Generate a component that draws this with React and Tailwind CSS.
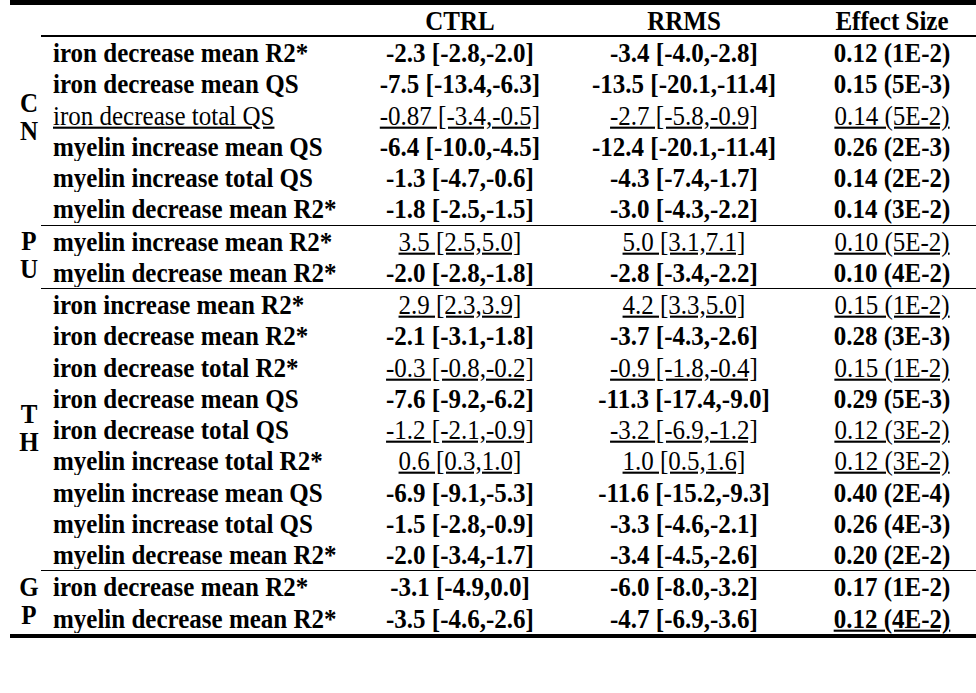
import React from 'react';

// b = bold, u = regular + underline, bu = bold + underline
const groups = [
  {
    letters: ['C', 'N'],
    lift: true,
    rows: [
      ['iron decrease mean R2*', 'b', ['-2.3 [-2.8,-2.0]', 'b'], ['-3.4 [-4.0,-2.8]', 'b'], ['0.12 (1E-2)', 'b']],
      ['iron decrease mean QS', 'b', ['-7.5 [-13.4,-6.3]', 'b'], ['-13.5 [-20.1,-11.4]', 'b'], ['0.15 (5E-3)', 'b']],
      ['iron decrease total QS', 'u', ['-0.87 [-3.4,-0.5]', 'u'], ['-2.7 [-5.8,-0.9]', 'u'], ['0.14 (5E-2)', 'u']],
      ['myelin increase mean QS', 'b', ['-6.4 [-10.0,-4.5]', 'b'], ['-12.4 [-20.1,-11.4]', 'b'], ['0.26 (2E-3)', 'b']],
      ['myelin increase total QS', 'b', ['-1.3 [-4.7,-0.6]', 'b'], ['-4.3 [-7.4,-1.7]', 'b'], ['0.14 (2E-2)', 'b']],
      ['myelin decrease mean R2*', 'b', ['-1.8 [-2.5,-1.5]', 'b'], ['-3.0 [-4.3,-2.2]', 'b'], ['0.14 (3E-2)', 'b']],
    ],
  },
  {
    letters: ['P', 'U'],
    rows: [
      ['myelin increase mean R2*', 'b', ['3.5 [2.5,5.0]', 'u'], ['5.0 [3.1,7.1]', 'u'], ['0.10 (5E-2)', 'u']],
      ['myelin decrease mean R2*', 'b', ['-2.0 [-2.8,-1.8]', 'b'], ['-2.8 [-3.4,-2.2]', 'b'], ['0.10 (4E-2)', 'b']],
    ],
  },
  {
    letters: ['T', 'H'],
    rows: [
      ['iron increase mean R2*', 'b', ['2.9 [2.3,3.9]', 'u'], ['4.2 [3.3,5.0]', 'u'], ['0.15 (1E-2)', 'u']],
      ['iron decrease mean R2*', 'b', ['-2.1 [-3.1,-1.8]', 'b'], ['-3.7 [-4.3,-2.6]', 'b'], ['0.28 (3E-3)', 'b']],
      ['iron decrease total R2*', 'b', ['-0.3 [-0.8,-0.2]', 'u'], ['-0.9 [-1.8,-0.4]', 'u'], ['0.15 (1E-2)', 'u']],
      ['iron decrease mean QS', 'b', ['-7.6 [-9.2,-6.2]', 'b'], ['-11.3 [-17.4,-9.0]', 'b'], ['0.29 (5E-3)', 'b']],
      ['iron decrease total QS', 'b', ['-1.2 [-2.1,-0.9]', 'u'], ['-3.2 [-6.9,-1.2]', 'u'], ['0.12 (3E-2)', 'u']],
      ['myelin increase total R2*', 'b', ['0.6 [0.3,1.0]', 'u'], ['1.0 [0.5,1.6]', 'u'], ['0.12 (3E-2)', 'u']],
      ['myelin increase mean QS', 'b', ['-6.9 [-9.1,-5.3]', 'b'], ['-11.6 [-15.2,-9.3]', 'b'], ['0.40 (2E-4)', 'b']],
      ['myelin increase total QS', 'b', ['-1.5 [-2.8,-0.9]', 'b'], ['-3.3 [-4.6,-2.1]', 'b'], ['0.26 (4E-3)', 'b']],
      ['myelin decrease mean R2*', 'b', ['-2.0 [-3.4,-1.7]', 'b'], ['-3.4 [-4.5,-2.6]', 'b'], ['0.20 (2E-2)', 'b']],
    ],
  },
  {
    letters: ['G', 'P'],
    rows: [
      ['iron decrease mean R2*', 'b', ['-3.1 [-4.9,0.0]', 'b'], ['-6.0 [-8.0,-3.2]', 'b'], ['0.17 (1E-2)', 'b']],
      ['myelin decrease mean R2*', 'b', ['-3.5 [-4.6,-2.6]', 'b'], ['-4.7 [-6.9,-3.6]', 'b'], ['0.12 (4E-2)', 'bu']],
    ],
  },
];

const styleFor = (s) =>
  s === 'b' ? 'font-bold' : s === 'u' ? 'font-normal underline' : 'font-bold underline';

// the source glyphs are a touch taller than they are wide
const Txt = ({ s, children }) => (
  <span className={`inline-block scale-y-[1.06] ${styleFor(s)}`}>{children}</span>
);

const Row = ({ row }) => {
  const [label, labelStyle, ctrl, rrms, effect] = row;
  return (
    <div className="flex items-center h-[31.25px] leading-none">
      <div className="w-[319px] pl-[12px]">
        <Txt s={labelStyle}>{label}</Txt>
      </div>
      <div className="w-[200px] text-center">
        <Txt s={ctrl[1]}>{ctrl[0]}</Txt>
      </div>
      <div className="w-[248px] text-center">
        <Txt s={rrms[1]}>{rrms[0]}</Txt>
      </div>
      <div className="w-[168px] text-center">
        <Txt s={effect[1]}>{effect[0]}</Txt>
      </div>
    </div>
  );
};

const Group = ({ group, first }) => (
  <div className="flex">
    <div
      className={`w-[31px] pl-[7px] flex flex-col items-center justify-center font-bold leading-[28px] ${
        group.lift ? 'pb-[26px]' : ''
      }`}
    >
      {group.letters.map((l) => (
        <span key={l} className="scale-y-[1.06]">
          {l}
        </span>
      ))}
    </div>
    <div className={`flex-1 ${first ? '' : 'border-t border-black'}`}>
      {group.rows.map((row, i) => (
        <Row key={i} row={row} />
      ))}
    </div>
  </div>
);

export default function App() {
  return (
    <div className="w-[976px] h-[693px] bg-white text-black text-[25px] font-['Liberation_Serif','Times_New_Roman',serif] pl-[10px]">
      <div className="w-[966px]">
        <div className="h-[5px] bg-black" />
        <div className="flex">
          <div className="w-[31px]" />
          <div className="flex-1 h-[32px] border-b-2 border-black flex items-center leading-none">
            <div className="w-[319px]" />
            <div className="w-[200px] text-center">
              <Txt s="b">CTRL</Txt>
            </div>
            <div className="w-[248px] text-center">
              <Txt s="b">RRMS</Txt>
            </div>
            <div className="w-[168px] text-center">
              <Txt s="b">Effect Size</Txt>
            </div>
          </div>
        </div>
        {groups.map((g, i) => (
          <Group key={i} group={g} first={i === 0} />
        ))}
        <div className="h-[4px] bg-black" />
      </div>
    </div>
  );
}
